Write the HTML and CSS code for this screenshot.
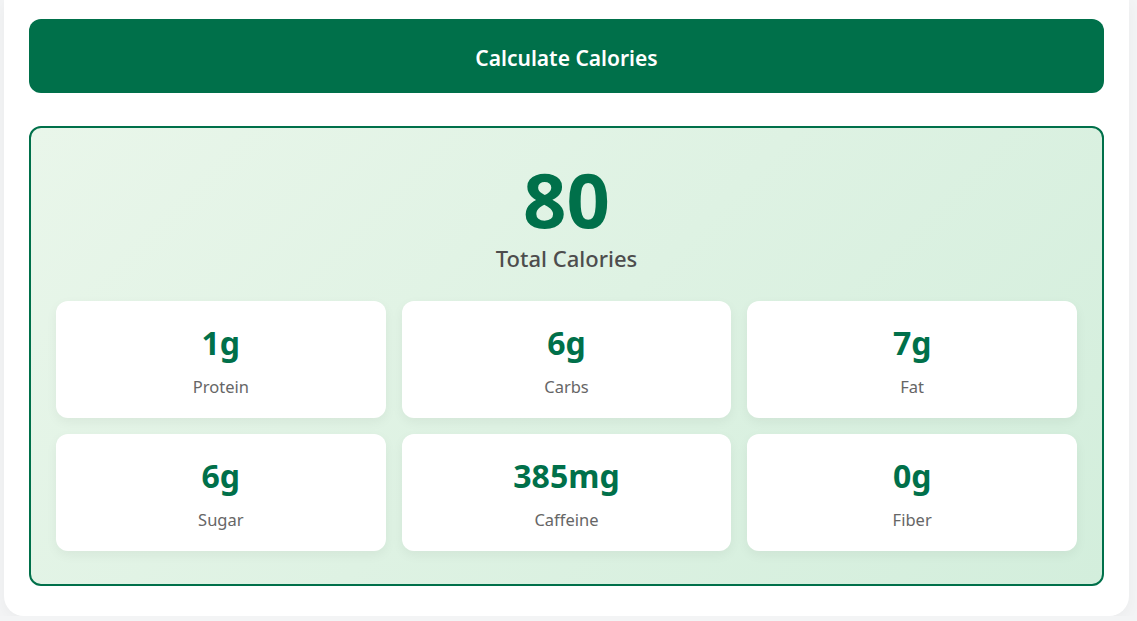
FILE: index.html
```html
<!DOCTYPE html>
<html>
<head>
<meta charset="utf-8">
<link rel="stylesheet" href="styles.css">
</head>
<body>
<div class="card">
  <button class="calc-btn">Calculate Calories</button>
  <div class="result">
    <div class="total">80</div>
    <div class="total-label">Total Calories</div>
    <div class="grid">
      <div class="item"><div class="value">1g</div><div class="label">Protein</div></div>
      <div class="item"><div class="value">6g</div><div class="label">Carbs</div></div>
      <div class="item"><div class="value">7g</div><div class="label">Fat</div></div>
      <div class="item"><div class="value">6g</div><div class="label">Sugar</div></div>
      <div class="item"><div class="value">385mg</div><div class="label">Caffeine</div></div>
      <div class="item"><div class="value">0g</div><div class="label">Fiber</div></div>
    </div>
  </div>
</div>
</body>
</html>
```

FILE: styles.css
```css
html, body {
  margin: 0;
  padding: 0;
  background: #f3f4f5;
  font-family: "Noto Sans", "Open Sans", sans-serif;
}
.card {
  width: 1125px;
  margin-left: 4px;
  box-sizing: border-box;
  background: #ffffff;
  border-radius: 0 0 20px 20px;
  padding: 19px 25px 30px 25px;
  box-shadow: 0 4px 16px rgba(0,0,0,0.04);
}
.calc-btn {
  display: block;
  width: 100%;
  height: 74px;
  padding: 3px 0 0 0;
  border: none;
  border-radius: 12px;
  background: #00704a;
  color: #ffffff;
  font-family: inherit;
  font-size: 21px;
  font-weight: 600;
  cursor: pointer;
}
.result {
  margin-top: 33px;
  border: 2px solid #00704a;
  border-radius: 12px;
  background: linear-gradient(135deg, #e9f6ea 0%, #d3eedc 100%);
  padding: 29px 25px 33px 25px;
  text-align: center;
}
.total {
  font-size: 76px;
  font-weight: 700;
  color: #00704a;
  line-height: 84px;
}
.total-label {
  margin-top: 2px;
  font-size: 22px;
  font-weight: 500;
  color: #4d4d4d;
}
.grid {
  margin-top: 28px;
  display: grid;
  grid-template-columns: repeat(3, 1fr);
  gap: 16px;
}
.item {
  background: #ffffff;
  border-radius: 12px;
  padding: 23px 10px 20px 10px;
  box-shadow: 0 4px 12px rgba(0,0,0,0.05);
}
.value {
  font-size: 32px;
  font-weight: 700;
  color: #00704a;
  line-height: 38px;
}
.label {
  margin-top: 14px;
  font-size: 16.5px;
  color: #666666;
  line-height: 22px;
}
```
